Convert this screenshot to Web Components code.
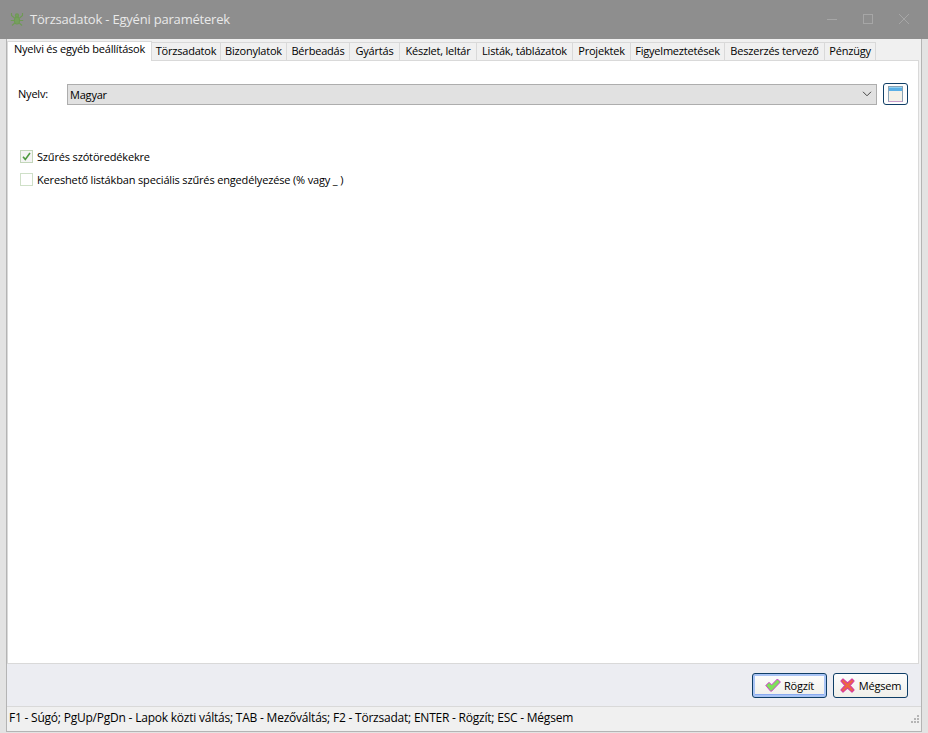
<!DOCTYPE html>
<html lang="hu">
<head>
<meta charset="utf-8">
<title>Törzsadatok - Egyéni paraméterek</title>
<style>
    html, body { margin: 0; height: 100%; }
    body { font: 11px "Open Sans", "Noto Sans", "Liberation Sans", sans-serif; color: #000; letter-spacing: -0.2px; }
</style>
</head>
<body>
<app-window>
    <title-bar slot="title">Törzsadatok - Egyéni paraméterek</title-bar>
    <tab-strip slot="tabs">
        <tab-item width="145" active>Nyelvi és egyéb beállítások</tab-item>
        <tab-item width="70">Törzsadatok</tab-item>
        <tab-item width="67">Bizonylatok</tab-item>
        <tab-item width="64">Bérbeadás</tab-item>
        <tab-item width="51">Gyártás</tab-item>
        <tab-item width="78">Készlet, leltár</tab-item>
        <tab-item width="97">Listák, táblázatok</tab-item>
        <tab-item width="59">Projektek</tab-item>
        <tab-item width="95">Figyelmeztetések</tab-item>
        <tab-item width="101">Beszerzés tervező</tab-item>
        <tab-item width="52">Pénzügy</tab-item>
    </tab-strip>
    <tab-panel slot="panel">
        <language-row label="Nyelv:" value="Magyar"></language-row>
        <check-list>
            <check-box checked>Szűrés szótöredékekre</check-box>
            <check-box>Kereshető listákban speciális szűrés engedélyezése (% vagy _ )</check-box>
        </check-list>
    </tab-panel>
    <action-bar slot="actions">
        <action-button kind="ok" focused>Rögzít</action-button>
        <action-button kind="cancel">Mégsem</action-button>
    </action-bar>
    <status-bar slot="status">F1 - Súgó; PgUp/PgDn - Lapok közti váltás; TAB - Mezőváltás; F2 - Törzsadat; ENTER - Rögzít; ESC - Mégsem</status-bar>
</app-window>

<script>
class AppWindow extends HTMLElement {
    constructor() {
        super();
        this.attachShadow({ mode: 'open' }).innerHTML = `
            <style>
                :host {
                    display: flex;
                    flex-direction: column;
                    height: 733px;
                    box-sizing: border-box;
                    background: #e3e3e3;
                }
                ::slotted([slot="title"]) { height: 39px; flex: none; }
                .frame {
                    flex: 1;
                    min-height: 0;
                    display: grid;
                    grid-template-rows: 2px 19px 1fr 43px 24px;
                    margin: 0 6px 1px 6px;
                    background: #f0f0f0;
                    border: 1px solid #b4b4b4;
                    border-top: 0;
                }
                ::slotted([slot="tabs"]) { grid-row: 2; }
                ::slotted([slot="panel"]) { grid-row: 3; margin-right: 2px; }
                ::slotted([slot="actions"]) { grid-row: 4; }
                ::slotted([slot="status"]) { grid-row: 5; }
            </style>
            <slot name="title"></slot>
            <div class="frame">
                <slot name="tabs"></slot>
                <slot name="panel"></slot>
                <slot name="actions"></slot>
                <slot name="status"></slot>
            </div>
        `;
    }
}

class TitleBar extends HTMLElement {
    constructor() {
        super();
        this.attachShadow({ mode: 'open' }).innerHTML = `
            <style>
                :host {
                    display: flex;
                    align-items: center;
                    box-sizing: border-box;
                    background: #8e8e8e;
                    color: #e9e9e9;
                    font: 13px "Open Sans", "Noto Sans", sans-serif;
                    letter-spacing: -0.2px;
                    padding: 0 6px 2px 10px;
                }
                .text { margin-left: 6px; flex: 1; }
                .ctl { width: 36px; display: flex; align-items: center; justify-content: center; }
                svg { display: block; }
            </style>
            <svg width="14" height="14" viewBox="0 0 14 14" fill="none" stroke="#6f9a55" stroke-width="1.100">
                <ellipse cx="7" cy="8.500" rx="2.600" ry="3.500" fill="#769f5e"/>
                <circle cx="7" cy="3.500" r="1.600" fill="#769f5e"/>
                <path d="M4.500 6L1.500 3.500V1M9.500 6l3-2.500V1M4.300 8.500H.8M9.700 8.500h3.500M4.800 11L2 13.500M9.200 11l2.800 2.500"/>
            </svg>
            <span class="text"><slot></slot></span>
            <div class="ctl"><svg width="10" height="10" viewBox="0 0 10 10"><path d="M0 5.500h10" stroke="#a6a6a6"/></svg></div>
            <div class="ctl"><svg width="10" height="10" viewBox="0 0 10 10"><rect x=".5" y=".5" width="9" height="9" fill="none" stroke="#a6a6a6"/></svg></div>
            <div class="ctl"><svg width="10" height="10" viewBox="0 0 10 10"><path d="M0 0l10 10M10 0L0 10" stroke="#a6a6a6"/></svg></div>
        `;
    }
}

class TabStrip extends HTMLElement {
    constructor() {
        super();
        this.attachShadow({ mode: 'open' }).innerHTML = `
            <style>
                :host {
                    display: flex;
                    align-items: flex-end;
                    padding-left: 1px;
                    position: relative;
                    z-index: 1;
                }
            </style>
            <slot></slot>
        `;
    }
}

class TabItem extends HTMLElement {
    constructor() {
        super();
        this.attachShadow({ mode: 'open' }).innerHTML = `
            <style>
                :host {
                    display: flex;
                    align-items: center;
                    justify-content: center;
                    box-sizing: border-box;
                    height: 18px;
                    background: #f0f0f0;
                    border: 1px solid #d9d9d9;
                    border-bottom: 0;
                    margin-left: -1px;
                    padding-bottom: 2px;
                    white-space: nowrap;
                    color: #000;
                }
                :host([active]) {
                    height: 20px;
                    margin-bottom: -1px;
                    background: #fff;
                    padding-bottom: 6px;
                    position: relative;
                    z-index: 1;
                }
            </style>
            <slot></slot>
        `;
    }

    connectedCallback() {
        this.style.width = this.getAttribute('width') + 'px';
    }
}

class TabPanel extends HTMLElement {
    constructor() {
        super();
        this.attachShadow({ mode: 'open' }).innerHTML = `
            <style>
                :host {
                    display: block;
                    box-sizing: border-box;
                    background: #fff;
                    border: 1px solid #d9d9d9;
                    padding: 22px 10px 0 10px;
                }
            </style>
            <slot></slot>
        `;
    }
}

class LanguageRow extends HTMLElement {
    constructor() {
        super();
        this.attachShadow({ mode: 'open' }).innerHTML = `
            <style>
                :host {
                    display: flex;
                    align-items: center;
                    height: 22px;
                }
                .label { width: 49px; color: #000; padding-bottom: 2px; box-sizing: border-box; }
                .select {
                    flex: 1;
                    height: 21px;
                    box-sizing: border-box;
                    display: flex;
                    align-items: center;
                    justify-content: space-between;
                    background: #e1e1e1;
                    border: 1px solid #adadad;
                    padding: 0 4px 0 2px;
                }
                .pick {
                    width: 25px;
                    height: 22px;
                    box-sizing: border-box;
                    margin-left: 6px;
                    display: flex;
                    align-items: center;
                    justify-content: center;
                    background: #fdfdfd;
                    border: 1px solid #0f3e66;
                    border-radius: 3px;
                }
                svg { display: block; }
            </style>
            <span class="label"></span>
            <div class="select">
                <span class="value"></span>
                <svg width="10" height="6" viewBox="0 0 10 6" fill="none"><path d="M1 .8l4 4 4-4" stroke="#444"/></svg>
            </div>
            <div class="pick">
                <svg width="15" height="16" viewBox="0 0 15 16">
                    <rect x=".5" y=".5" width="14" height="15" fill="#f3f1e8" stroke="#8aa3b5"/>
                    <rect x="1" y="1" width="13" height="4" fill="#5bb0e6"/>
                    <path d="M1 1.500h13" stroke="#8fd0f2"/>
                    <path d="M.5 15.500h14" stroke="#c79bc9"/>
                </svg>
            </div>
        `;
    }

    connectedCallback() {
        this.shadowRoot.querySelector('.label').textContent = this.getAttribute('label');
        this.shadowRoot.querySelector('.value').textContent = this.getAttribute('value');
    }
}

class CheckList extends HTMLElement {
    constructor() {
        super();
        this.attachShadow({ mode: 'open' }).innerHTML = `
            <style>
                :host {
                    display: flex;
                    flex-direction: column;
                    gap: 9px;
                    margin: 44px 0 0 2px;
                }
            </style>
            <slot></slot>
        `;
    }
}

class CheckBox extends HTMLElement {
    constructor() {
        super();
        this.attachShadow({ mode: 'open' }).innerHTML = `
            <style>
                :host {
                    display: flex;
                    align-items: center;
                    gap: 4px;
                    height: 14px;
                    white-space: nowrap;
                    letter-spacing: -0.16px;
                }
                .box {
                    width: 13px;
                    height: 13px;
                    box-sizing: border-box;
                    border: 1px solid #cfe0c8;
                    background: #fff;
                    display: flex;
                    align-items: center;
                    justify-content: center;
                }
                :host([checked]) .box { background: #f4f4f4; border-color: #c2d6b9; }
                svg { display: none; }
                :host([checked]) svg { display: block; }
            </style>
            <span class="box">
                <svg width="11" height="11" viewBox="0 0 11 11" fill="none"><path d="M2 5.800l2.300 2.600L9 2" stroke="#4e9a3f" stroke-width="1.600"/></svg>
            </span>
            <span><slot></slot></span>
        `;
    }
}

class ActionBar extends HTMLElement {
    constructor() {
        super();
        this.attachShadow({ mode: 'open' }).innerHTML = `
            <style>
                :host {
                    display: flex;
                    justify-content: flex-end;
                    align-items: flex-start;
                    gap: 6px;
                    box-sizing: border-box;
                    background: #ecedf2;
                    padding: 9px 13px 0 0;
                    border-bottom: 1px solid #d9d9d9;
                }
            </style>
            <slot></slot>
        `;
    }
}

class ActionButton extends HTMLElement {
    constructor() {
        super();
        const icons = {
            ok: '<path d="M.8 7.500L4 4.300l2.600 2.600L12.400 1l3 3-8.800 9.200h-1z" fill="#7fe05a" stroke="#d63ad6" stroke-linejoin="round"/>',
            cancel: '<path d="M3 1l4.500 4L12 1l2 2-4 4.500 4 4.500-2 2-4.500-4L3 14l-2-2 4-4.500L1 3z" fill="#ee6a3c" stroke="#d8409a" stroke-width="1.200" stroke-linejoin="round"/>'
        };
        const kind = this.getAttribute('kind');
        this.attachShadow({ mode: 'open' }).innerHTML = `
            <style>
                :host {
                    display: flex;
                    align-items: center;
                    justify-content: center;
                    gap: 3px;
                    width: 75px;
                    height: 25px;
                    box-sizing: border-box;
                    background: linear-gradient(#fdfdfd, #f0efe9);
                    border: 1px solid #0f3e66;
                    border-radius: 3px;
                }
                :host([focused]) {
                    box-shadow: inset 0 0 0 2px #a9c4f5, inset 0 -1px 0 2px #8aaaf0;
                }
                svg { display: block; }
            </style>
            <svg width="16" height="15" viewBox="0 0 16 15">${icons[kind]}</svg>
            <span><slot></slot></span>
        `;
    }
}

class StatusBar extends HTMLElement {
    constructor() {
        super();
        this.attachShadow({ mode: 'open' }).innerHTML = `
            <style>
                :host {
                    display: flex;
                    align-items: center;
                    justify-content: space-between;
                    background: #f0f0f0;
                    padding: 0 2px 3px 2px;
                    white-space: nowrap;
                    font-size: 12px;
                    letter-spacing: -0.22px;
                }
                svg { display: block; margin-top: 3px; }
            </style>
            <span><slot></slot></span>
            <svg width="8" height="8" viewBox="0 0 8 8" fill="#b5b5b5">
                <rect x="6" y="0" width="2" height="2"/>
                <rect x="3" y="3" width="2" height="2"/><rect x="6" y="3" width="2" height="2"/>
                <rect x="0" y="6" width="2" height="2"/><rect x="3" y="6" width="2" height="2"/><rect x="6" y="6" width="2" height="2"/>
            </svg>
        `;
    }
}

customElements.define('app-window', AppWindow);
customElements.define('title-bar', TitleBar);
customElements.define('tab-strip', TabStrip);
customElements.define('tab-item', TabItem);
customElements.define('tab-panel', TabPanel);
customElements.define('language-row', LanguageRow);
customElements.define('check-list', CheckList);
customElements.define('check-box', CheckBox);
customElements.define('action-bar', ActionBar);
customElements.define('action-button', ActionButton);
customElements.define('status-bar', StatusBar);
</script>
</body>
</html>
